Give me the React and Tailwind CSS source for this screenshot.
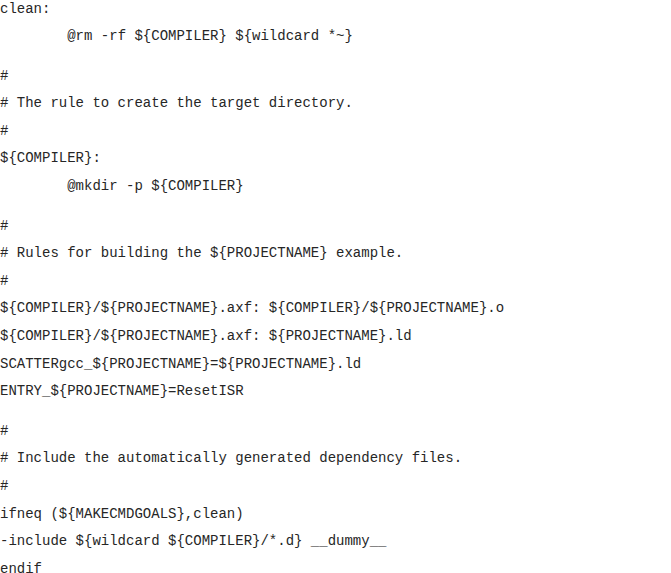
export default function App() {
  const blocks = [
    ["clean:", "\t@rm -rf ${COMPILER} ${wildcard *~}"],
    [
      "#",
      "# The rule to create the target directory.",
      "#",
      "${COMPILER}:",
      "\t@mkdir -p ${COMPILER}",
    ],
    [
      "#",
      "# Rules for building the ${PROJECTNAME} example.",
      "#",
      "${COMPILER}/${PROJECTNAME}.axf: ${COMPILER}/${PROJECTNAME}.o",
      "${COMPILER}/${PROJECTNAME}.axf: ${PROJECTNAME}.ld",
      "SCATTERgcc_${PROJECTNAME}=${PROJECTNAME}.ld",
      "ENTRY_${PROJECTNAME}=ResetISR",
    ],
    [
      "#",
      "# Include the automatically generated dependency files.",
      "#",
      "ifneq (${MAKECMDGOALS},clean)",
      "-include ${wildcard ${COMPILER}/*.d} __dummy__",
      "endif",
    ],
  ];
  return (
    <div className="w-[671px] h-[573px] overflow-hidden bg-white">
      <div
        className="mt-[-4.5px] flex flex-col gap-[12px] text-[14px] leading-[27.6px] text-[#262626] whitespace-pre [tab-size:8]"
        style={{ fontFamily: '"Liberation Mono", "Courier New", monospace' }}
      >
        {blocks.map((b, i) => (
          <div key={i} className="flex flex-col">
            {b.map((l, j) => (
              <div key={j}>{l}</div>
            ))}
          </div>
        ))}
      </div>
    </div>
  );
}
